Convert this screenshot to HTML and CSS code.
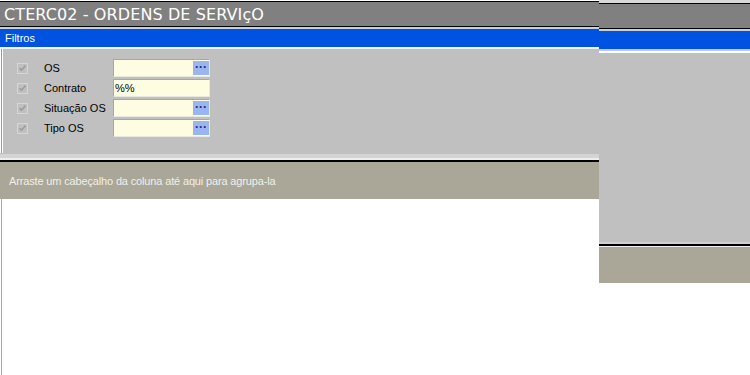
FILE: index.html
```html
<!DOCTYPE html>
<html>
<head>
<meta charset="utf-8">
<link rel="stylesheet" href="styles.css">
</head>
<body>
<div class="screen">
  <div class="left">
    <div class="title"><span class="title-text">CTERC02 - ORDENS DE SERVIçO</span></div>
    <div class="sep-dark"></div>
    <div class="band"><span class="band-text">Filtros</span></div>
    <div class="sep-light"></div>
    <div class="panel">
      <div class="rows">
        <div class="row">
          <span class="chk"><svg width="11" height="11" viewBox="0 0 11 11"><path d="M2.5 5.2 L4.4 7.2 L8.5 2.8" fill="none" stroke="#9a9a9a" stroke-width="1.6"/></svg></span>
          <span class="lbl">OS</span>
          <span class="field"><span class="val"></span><span class="btn">···</span></span>
        </div>
        <div class="row">
          <span class="chk"><svg width="11" height="11" viewBox="0 0 11 11"><path d="M2.5 5.2 L4.4 7.2 L8.5 2.8" fill="none" stroke="#9a9a9a" stroke-width="1.6"/></svg></span>
          <span class="lbl">Contrato</span>
          <span class="field"><span class="val">%%</span></span>
        </div>
        <div class="row">
          <span class="chk"><svg width="11" height="11" viewBox="0 0 11 11"><path d="M2.5 5.2 L4.4 7.2 L8.5 2.8" fill="none" stroke="#9a9a9a" stroke-width="1.6"/></svg></span>
          <span class="lbl">Situação OS</span>
          <span class="field"><span class="val"></span><span class="btn">···</span></span>
        </div>
        <div class="row">
          <span class="chk"><svg width="11" height="11" viewBox="0 0 11 11"><path d="M2.5 5.2 L4.4 7.2 L8.5 2.8" fill="none" stroke="#9a9a9a" stroke-width="1.6"/></svg></span>
          <span class="lbl">Tipo OS</span>
          <span class="field"><span class="val"></span><span class="btn">···</span></span>
        </div>
      </div>
    </div>
    <div class="panel-foot"></div>
    <div class="group"><span class="group-text">Arraste um cabeçalho da coluna até aqui para agrupa-la</span></div>
    <div class="grid"></div>
  </div>
  <div class="right">
    <div class="r-top"></div>
    <div class="r-title"></div>
    <div class="sep-dark"></div>
    <div class="r-band"></div>
    <div class="r-sep"></div>
    <div class="r-panel"></div>
    <div class="r-foot"></div>
    <div class="r-group"></div>
    <div class="r-white"></div>
  </div>
</div>
</body>
</html>
```

FILE: styles.css
```css
html, body {
  margin: 0;
  padding: 0;
  background: #ffffff;
  overflow: hidden;
}
.screen {
  display: flex;
  width: 750px;
  height: 375px;
  font-family: "DejaVu Sans", "Liberation Sans", sans-serif;
}
.left {
  width: 599px;
  display: flex;
  flex-direction: column;
}
.right {
  width: 151px;
  display: flex;
  flex-direction: column;
}
.title {
  height: 24px;
  margin-top: 1px;
  border-top: 1px solid #000;
  background: #808080;
  display: flex;
  align-items: center;
  padding-left: 4px;
}
.title-text {
  color: #ffffff;
  font-size: 16px;
  letter-spacing: 0.1px;
  line-height: 20px;
  margin-top: 1px;
}
.sep-dark {
  height: 1px;
  background: #000;
  border-bottom: 2px solid #c8cfdc;
}
.band {
  height: 18px;
  background: #0052e0;
  display: flex;
  align-items: center;
  padding-left: 5px;
}
.band-text {
  color: #ffffff;
  font-family: "Liberation Sans", sans-serif;
  font-size: 11px;
}
.sep-light {
  height: 2px;
  background: #f4f4f4;
}
.panel {
  box-sizing: border-box;
  height: 104px;
  background: #c0c0c0;
  border-left: 1px solid #9a9a9a;
  margin-left: 1px;
  box-shadow: inset 1px 0 0 #ffffff;
  padding: 10px 0 0 14px;
}
.rows {
  display: flex;
  flex-direction: column;
  gap: 2px;
}
.row {
  display: flex;
  align-items: center;
  height: 18px;
}
.chk {
  width: 11px;
  height: 11px;
  background: #c0c0c0;
  border: 1px solid #d6d6d6;
  box-sizing: border-box;
  display: flex;
  margin-left: 1px;
}
.chk svg { display: block; margin: -1px; }
.lbl {
  margin-left: 16px;
  width: 69px;
  font-family: "Liberation Sans", sans-serif;
  font-size: 11px;
  color: #000;
}
.field {
  width: 97px;
  height: 18px;
  box-sizing: border-box;
  background: #fffde1;
  border: 1px solid #a8a8a0;
  border-right-color: #e8e8e0;
  border-bottom-color: #e8e8e0;
  display: flex;
  align-items: stretch;
}
.val {
  flex: 1;
  font-family: "Liberation Sans", sans-serif;
  font-size: 11px;
  line-height: 16px;
  padding-left: 1px;
  color: #000;
}
.btn {
  width: 16px;
  margin: 1px 0 1px 0;
  background: #99b6f0;
  color: #1c2e88;
  font-weight: bold;
  font-size: 12px;
  line-height: 12px;
  text-align: center;
  font-family: "Liberation Sans", sans-serif;
}
.panel-foot {
  height: 9px;
  background: linear-gradient(#c0c0c0 0 1px, #d4d4d4 1px 5px, #eeeeee 5px 7px, #000 7px 9px);
}
.group {
  height: 37px;
  background: #aaa698;
  display: flex;
  align-items: center;
  padding-left: 9px;
}
.group-text {
  color: #f0f0ea;
  font-family: "Liberation Sans", sans-serif;
  font-size: 11px;
  letter-spacing: -0.15px;
}
.grid {
  flex: 1;
  background: #ffffff;
  border-left: 1px solid #a8a8a8;
  margin-left: 1px;
}
.r-top {
  height: 3px;
  background: #d8d8d8;
}
.r-title {
  height: 24px;
  border-top: 1px solid #000;
  background: #808080;
}
.r-band {
  height: 18px;
  background: #0052e0;
}
.r-sep {
  height: 4px;
  background: linear-gradient(#c0c8dc 0 2px, #ffffff 2px 4px);
}
.r-panel {
  height: 189px;
  background: #c0c0c0;
}
.r-foot {
  height: 5px;
  background: linear-gradient(#d0d0d0 0 2px, #000 2px 4px, #f0f0f0 4px 5px);
}
.r-group {
  height: 36px;
  background: #aaa698;
}
.r-white {
  flex: 1;
  background: #ffffff;
}
```
